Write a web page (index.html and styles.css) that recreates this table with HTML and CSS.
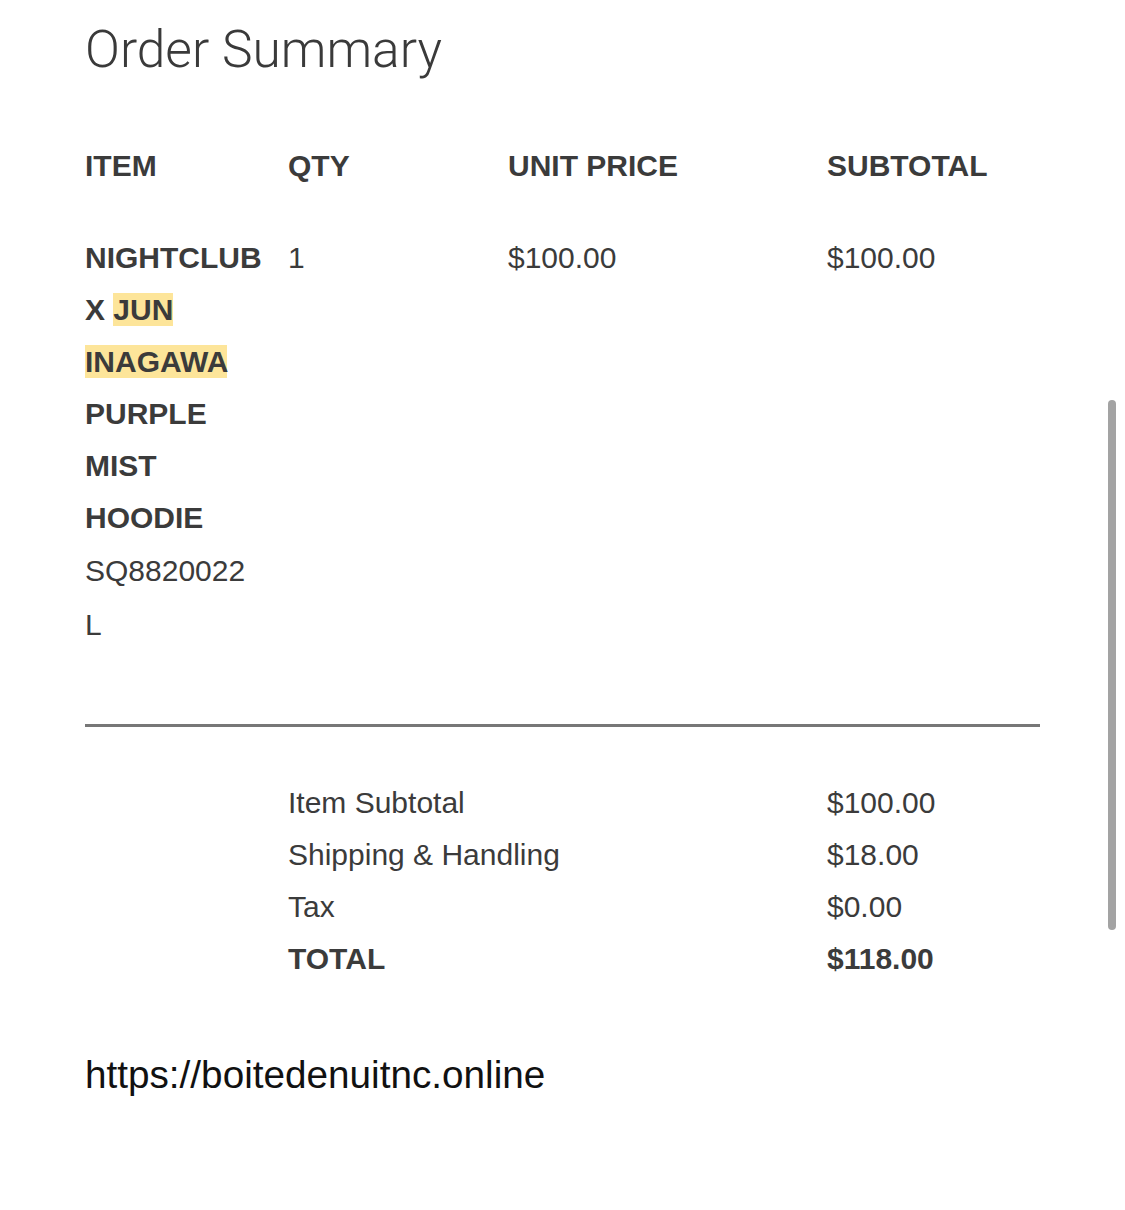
FILE: index.html
```html
<!DOCTYPE html>
<html lang="en">

<head>
    <meta charset="UTF-8">
    <meta name="viewport" content="width=device-width, initial-scale=1.0">
    <title>Order Summary</title>
    <link rel="stylesheet" href="styles.css">
</head>

<body>
    <section class="order-summary">
        <h1>Order Summary</h1>

        <!-- Column headers -->
        <div class="order-grid order-head">
            <div>ITEM</div>
            <div>QTY</div>
            <div>UNIT PRICE</div>
            <div>SUBTOTAL</div>
        </div>

        <!-- Line item -->
        <div class="order-grid order-item">
            <div class="item-info">
                <div class="item-name">NIGHTCLUB X <mark>JUN</mark> <mark>INAGAWA</mark> PURPLE MIST HOODIE</div>
                <div class="item-meta">SQ8820022</div>
                <div class="item-meta">L</div>
            </div>
            <div class="item-qty">1</div>
            <div>$100.00</div>
            <div>$100.00</div>
        </div>

        <hr class="divider">

        <!-- Totals -->
        <div class="order-grid totals">
            <div class="totals-label">Item Subtotal</div>
            <div class="totals-value">$100.00</div>

            <div class="totals-label">Shipping &amp; Handling</div>
            <div class="totals-value">$18.00</div>

            <div class="totals-label">Tax</div>
            <div class="totals-value">$0.00</div>

            <div class="totals-label total">TOTAL</div>
            <div class="totals-value total">$118.00</div>
        </div>

        <p class="site-link">https://boitedenuitnc.online</p>
    </section>

    <!-- overlay scrollbar -->
    <div class="scroll-thumb"></div>
</body>

</html>
```

FILE: styles.css
```css
body {
    margin: 0;
    background-color: white;
    color: #3b3b3b;
    font-family: "Liberation Sans", Arial, sans-serif;
}

.order-summary {
    width: 955px;
    padding: 20px 0 60px 85px;
}

.order-summary h1 {
    margin: 0 0 60px;
    font-family: Roboto, "Liberation Sans", sans-serif;
    font-weight: 300;
    font-size: 51.5px;
    line-height: 60px;
    color: #3a3a3a;
}

.order-grid {
    display: grid;
    grid-template-columns: 203px 220px 319px 1fr;
    font-size: 30px;
    line-height: 52px;
}

.order-head {
    font-weight: bold;
    margin-bottom: 40px;
}

.item-name {
    font-weight: bold;
    padding-right: 10px;
}

.item-name mark {
    background-color: #fde59a;
    color: inherit;
}

.item-meta {
    line-height: 54px;
}

.item-info .item-meta:first-of-type {
    margin-top: 2px;
}

.divider {
    border: none;
    height: 3px;
    background-color: #777;
    margin: 72px 0 50px;
}

.totals-label {
    grid-column: 2 / 4;
    white-space: nowrap;
}

.totals-value {
    grid-column: 4;
}

.total {
    font-weight: bold;
}

.site-link {
    margin: 68px 0 0;
    font-size: 38.7px;
    line-height: 44px;
    color: #111;
}

.scroll-thumb {
    position: fixed;
    top: 400px;
    right: 9px;
    width: 8px;
    height: 530px;
    border-radius: 4px;
    background-color: #a3a3a3;
}
```
